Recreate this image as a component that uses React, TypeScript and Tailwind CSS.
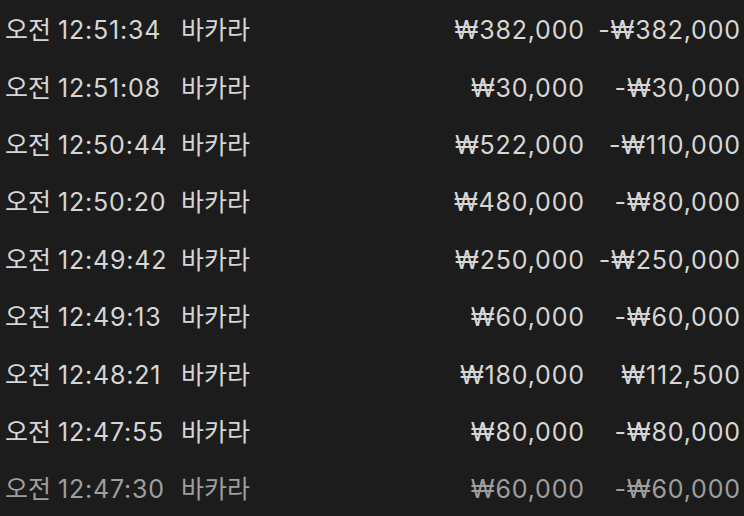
const rows = [
  { time: '12:51:34', game: '바카라', bet: '₩382,000', result: '-₩382,000' },
  { time: '12:51:08', game: '바카라', bet: '₩30,000', result: '-₩30,000' },
  { time: '12:50:44', game: '바카라', bet: '₩522,000', result: '-₩110,000' },
  { time: '12:50:20', game: '바카라', bet: '₩480,000', result: '-₩80,000' },
  { time: '12:49:42', game: '바카라', bet: '₩250,000', result: '-₩250,000' },
  { time: '12:49:13', game: '바카라', bet: '₩60,000', result: '-₩60,000' },
  { time: '12:48:21', game: '바카라', bet: '₩180,000', result: '₩112,500' },
  { time: '12:47:55', game: '바카라', bet: '₩80,000', result: '-₩80,000' },
  { time: '12:47:30', game: '바카라', bet: '₩60,000', result: '-₩60,000' },
];

export default function App() {
  return (
    <div
      className="w-[744px] h-[516px] overflow-hidden bg-[#1c1c1c] pt-[2px]"
      style={{ fontFamily: 'Inter, "Noto Sans CJK KR", sans-serif' }}
    >
      {rows.map((row, i) => (
        <div
          key={i}
          className={`grid grid-cols-[176px_1fr_auto_156px] items-center h-[57.4px] pl-[5px] pr-[4px] text-[25px] leading-none ${
            i === rows.length - 1 ? 'text-[#9e9e9e]' : 'text-[#d6d6d6]'
          }`}
        >
          <span>
            오전 <span className="tracking-[0.8px]">{row.time}</span>
          </span>
          <span>{row.game}</span>
          <span className="text-right tracking-[0.8px] mr-[-0.8px]">{row.bet}</span>
          <span className="text-right tracking-[0.8px] mr-[-0.8px]">{row.result}</span>
        </div>
      ))}
    </div>
  );
}
